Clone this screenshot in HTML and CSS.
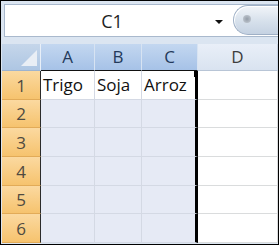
FILE: index.html
```html
<!DOCTYPE html>
<html lang="pt">
<head>
  <meta charset="UTF-8" />
  <title>Planilha</title>
  <link rel="stylesheet" href="styles.css">
</head>
<body>
  <div class="sheet">
    <div class="formula-bar">
      <div class="name-box">
        <span class="name">C1</span>
        <span class="arrow"></span>
      </div>
      <div class="fx-btn"><span class="dot"></span></div>
    </div>

    <div class="grid">
      <div class="corner"><span class="tri"></span></div>
      <div class="col-head sel">A</div>
      <div class="col-head sel">B</div>
      <div class="col-head sel">C</div>
      <div class="col-head">D</div>

      <div class="row-head">1</div>
      <div class="cell sel first">Trigo</div>
      <div class="cell sel first">Soja</div>
      <div class="cell sel first last">Arroz<span class="handle"></span></div>
      <div class="cell"></div>

      <div class="row-head">2</div>
      <div class="cell sel"></div>
      <div class="cell sel"></div>
      <div class="cell sel last"></div>
      <div class="cell"></div>

      <div class="row-head">3</div>
      <div class="cell sel"></div>
      <div class="cell sel"></div>
      <div class="cell sel last"></div>
      <div class="cell"></div>

      <div class="row-head">4</div>
      <div class="cell sel"></div>
      <div class="cell sel"></div>
      <div class="cell sel last"></div>
      <div class="cell"></div>

      <div class="row-head">5</div>
      <div class="cell sel"></div>
      <div class="cell sel"></div>
      <div class="cell sel last"></div>
      <div class="cell"></div>

      <div class="row-head">6</div>
      <div class="cell sel"></div>
      <div class="cell sel"></div>
      <div class="cell sel last"></div>
      <div class="cell"></div>
    </div>
  </div>
</body>
</html>
```

FILE: styles.css
```css
body {
  margin: 0;
  background: #fff;
  font-family: 'Open Sans', 'Liberation Sans', sans-serif;
}

.sheet {
  width: 279px;
  height: 245px;
  box-sizing: border-box;
  border: 1px solid #000;
  background: #dbe5f1;
  padding: 3px 0 0 1px;
  display: flex;
  flex-direction: column;
}

.formula-bar {
  display: flex;
  height: 33px;
  margin: 0 0 7px 2px;
  background: #fff;
  border: 1px solid #a9b9cd;
  border-right: none;
  box-sizing: border-box;
}

.name-box {
  flex: 1;
  display: flex;
  align-items: center;
}

.name {
  flex: 1;
  text-align: center;
  font-size: 18px;
  color: #1e1e1e;
  padding-left: 4px;
}

.arrow {
  width: 0;
  height: 0;
  border-left: 4px solid transparent;
  border-right: 4px solid transparent;
  border-top: 4px solid #111;
  margin: 2px 10px 0 0;
}

.fx-btn {
  width: 44px;
  margin: 0 0 1px;
  border: 1px solid #9fb0c6;
  border-right: none;
  border-radius: 16px 0 0 16px;
  background: linear-gradient(#f2f5f9, #d6e0eb 55%, #c5d2e2);
  box-shadow: inset 1px 1px 0 #fff;
  display: flex;
  align-items: center;
}

.dot {
  width: 8px;
  height: 8px;
  margin: 0 0 3px 9px;
  border-radius: 50%;
  background: radial-gradient(#939ca7, #c9d0d8);
}

.grid {
  flex: 1;
  display: grid;
  grid-template-columns: 39px 54px 47px 56px 1fr;
  grid-template-rows: 27px repeat(6, 1fr);
  margin-bottom: 1px;
}

.corner {
  background: linear-gradient(#c5d6ea, #aec6e3);
  border-right: 1px solid #e8eff8;
  border-bottom: 1px solid #9db3cf;
  position: relative;
}

.tri {
  position: absolute;
  right: 3px;
  bottom: 4px;
  width: 0;
  height: 0;
  border-left: 16px solid transparent;
  border-bottom: 16px solid #e9eef5;
}

.col-head {
  display: flex;
  justify-content: center;
  align-items: flex-end;
  padding-bottom: 2px;
  font-size: 17px;
  color: #3d3d3d;
  background: linear-gradient(#e9eff8, #d9e3f0);
  border-right: 1px solid #c7d3e3;
  border-bottom: 1px solid #b8c5d6;
}

.col-head.sel {
  color: #23395a;
  background: linear-gradient(#c3d7f0, #a6c2e7);
  border-right: 1px solid #d7e3f2;
  border-bottom: 1px solid #111;
}

.row-head {
  display: flex;
  justify-content: center;
  align-items: flex-end;
  padding-bottom: 2px;
  font-size: 17px;
  color: #4f4a40;
  background: linear-gradient(#fbd9a0, #f6c36e);
  border-right: 1px solid #2b2b2b;
  border-bottom: 1px solid #e2ab58;
}

.cell {
  display: flex;
  align-items: flex-end;
  padding: 0 0 3px 2px;
  font-size: 17px;
  color: #111;
  background: #fff;
  border-right: 1px solid #dadcdd;
  border-bottom: 1px solid #dadcdd;
  position: relative;
}

.cell.sel {
  background: #e6eaf5;
  border-right-color: #d4d9e4;
  border-bottom-color: #d4d9e4;
}

.cell.sel.first {
  background: #fff;
}

.cell.last {
  border-right: 3px solid #000;
}

.handle {
  position: absolute;
  top: 0;
  right: -5px;
  width: 6px;
  height: 6px;
  background: #000;
}
```
